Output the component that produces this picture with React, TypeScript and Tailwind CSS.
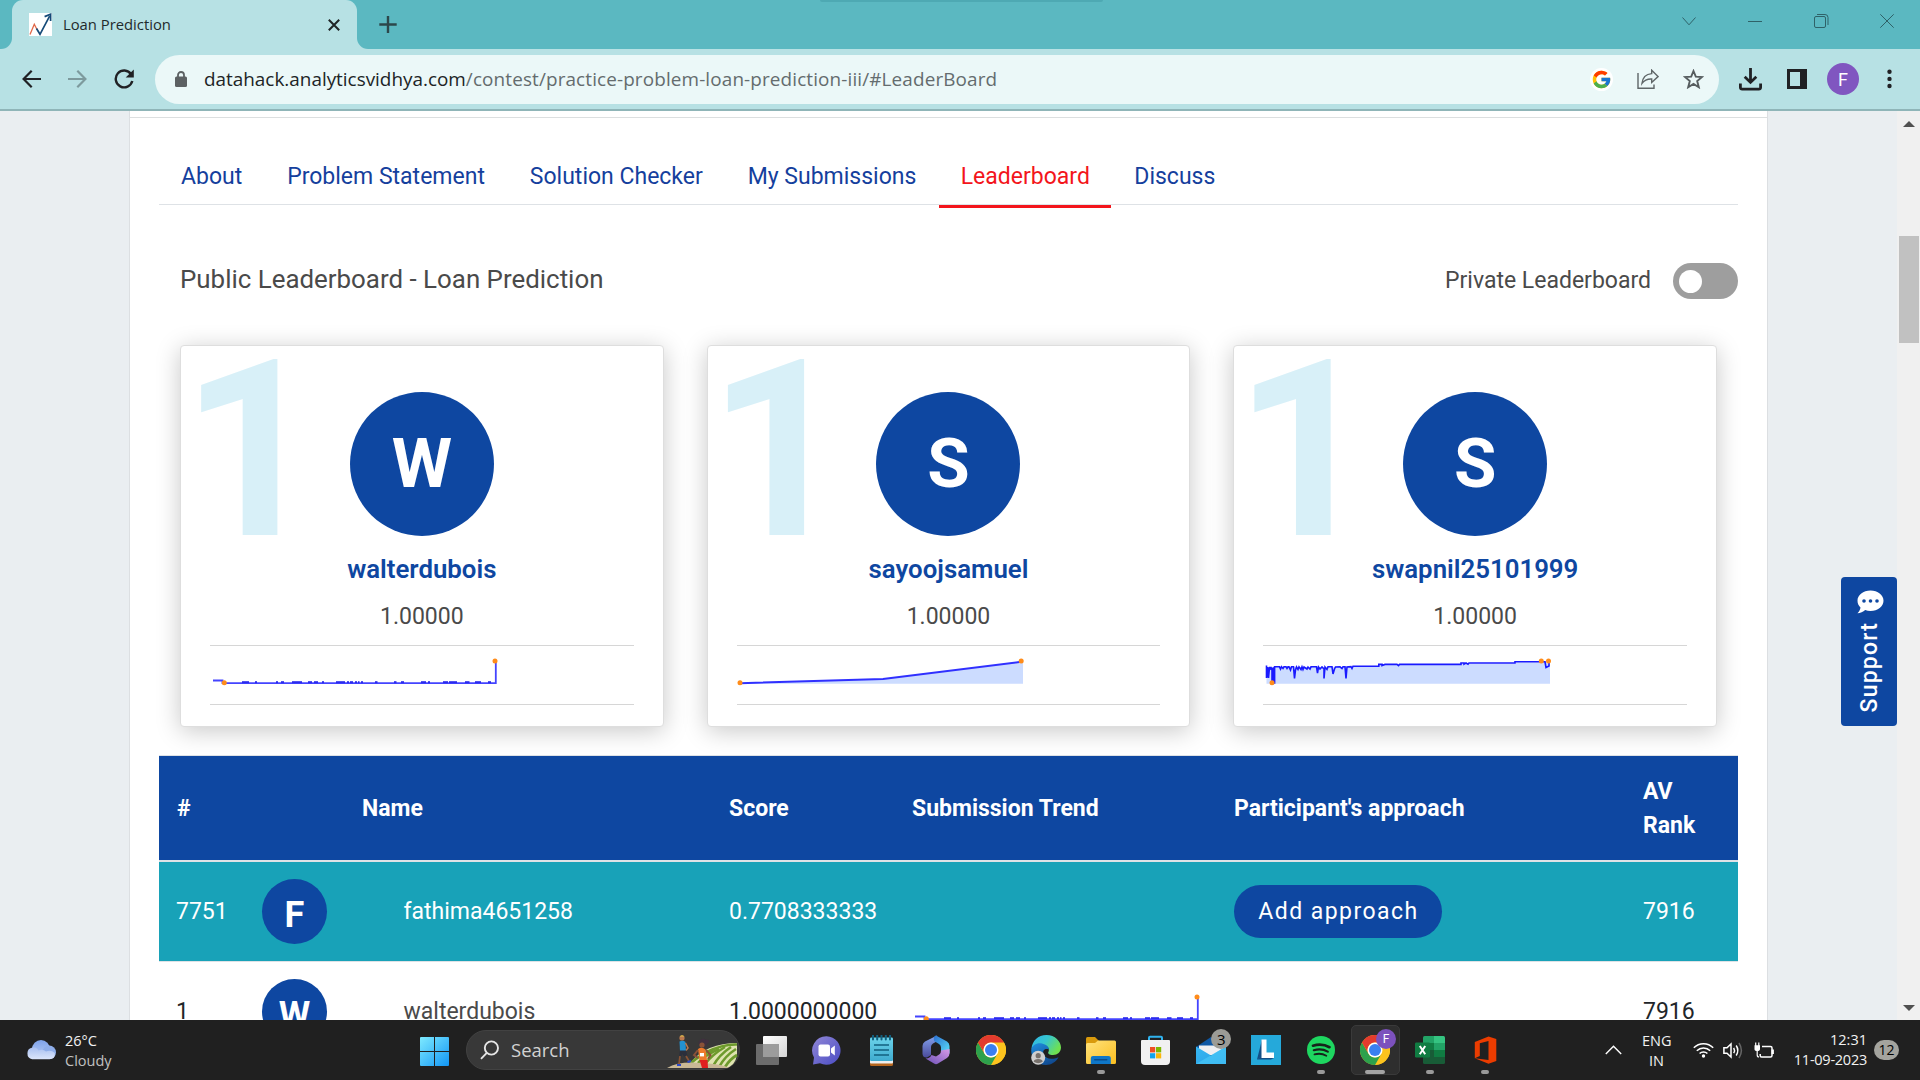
import React from "react";
import { FcGoogle } from "react-icons/fc";

/* ---------- Browser chrome ---------- */

function Favicon() {
  return (
    <svg width="23" height="23" viewBox="0 0 23 23">
      <rect width="23" height="23" fill="#fff" />
      <path d="M1 21.5L5.3 11.2L8 16.5" fill="none" stroke="#e2694a" strokeWidth="1.3" />
      <path d="M7.5 15.5L11 21.3L20.6 3.2" fill="none" stroke="#154a78" strokeWidth="1.7" />
      <path d="M15.6 3.6L21.6 1.2L21.6 8" fill="none" stroke="#154a78" strokeWidth="1.7" />
    </svg>
  );
}

function TabStrip() {
  return (
    <div className="relative flex h-[49px] shrink-0 bg-[#5bb8c1]">
      <div className="absolute top-0 left-[820px] h-[2px] w-[283px] rounded-b bg-[#4ea9b3]" />
      <div className="flex h-full w-3 items-end bg-[#b7e1e4]">
        <div className="h-full w-3 rounded-br-[11px] bg-[#5bb8c1]" />
      </div>
      <div className="flex h-full w-[345px] items-center rounded-t-[11px] bg-[#b7e1e4] pr-[17px] pl-[17px]">
        <Favicon />
        <span className="ml-[11px] grow font-['Open_Sans',sans-serif] text-[14.8px] text-[#1f2a2c]">Loan Prediction</span>
        <svg width="12" height="12" viewBox="0 0 12 12" stroke="#1f2426" strokeWidth="2">
          <path d="M0.8 0.8L11.2 11.2M11.2 0.8L0.8 11.2" />
        </svg>
      </div>
      <div className="h-full w-3 bg-[#b7e1e4]">
        <div className="h-full w-3 rounded-bl-[11px] bg-[#5bb8c1]" />
      </div>
      <svg className="mt-4 ml-[10px]" width="18" height="17" viewBox="0 0 18 17" stroke="#2c474b" strokeWidth="2.4">
        <path d="M9 0V17M0.3 8.5H17.7" />
      </svg>
      <div className="ml-auto flex items-start pt-[14px] pr-[26px] text-[#2f6268]">
        <svg className="mt-[3px] mr-[52px]" width="14" height="9" viewBox="0 0 14 9" fill="none" stroke="currentColor">
          <path d="M0.5 0.5L7 7.8L13.5 0.5" />
        </svg>
        <svg className="mt-[7px] mr-[52px]" width="14" height="1" viewBox="0 0 14 1">
          <rect width="14" height="1" fill="currentColor" />
        </svg>
        <svg className="mr-[51px]" width="15" height="14" viewBox="0 0 15 14" fill="none" stroke="currentColor">
          <rect x="0.5" y="2.5" width="11" height="11" rx="1.5" />
          <path d="M3 0.5H11A3 3 0 0 1 14 3.5V11" />
        </svg>
        <svg width="14" height="14" viewBox="0 0 14 14" fill="none" stroke="currentColor">
          <path d="M0.3 0.3L13.7 13.7M13.7 0.3L0.3 13.7" />
        </svg>
      </div>
    </div>
  );
}

function Toolbar() {
  return (
    <div className="flex h-[62px] shrink-0 items-center border-b-2 border-[#8fb5b8] bg-[#b7e1e4] text-[#202124]">
      <svg className="ml-[22px]" width="19" height="18" viewBox="0 0 19 18" fill="none" stroke="currentColor" strokeWidth="2.2">
        <path d="M19 9H2M9.7 0.8L1.6 9L9.7 17.2" />
      </svg>
      <svg className="ml-[27px]" width="19" height="18" viewBox="0 0 19 18" fill="none" stroke="#7d9a9d" strokeWidth="2.2">
        <path d="M0 9H17M9.3 0.8L17.4 9L9.3 17.2" />
      </svg>
      <svg className="ml-[27px]" width="20" height="20" viewBox="0 0 20 20" fill="none" stroke="currentColor" strokeWidth="2.4">
        <path d="M17.1 5.2A8.4 8.4 0 1 0 18.3 12" />
        <path d="M19.8 0.5V8.6H11.7Z" fill="currentColor" stroke="none" />
      </svg>
      <div className="ml-[21px] flex h-[49px] w-[1564px] items-center rounded-full bg-[#ebf8f8] pr-[15px] pl-[20px]">
        <svg width="12" height="16" viewBox="0 0 12 16">
          <path d="M3 6V4A3 3 0 0 1 9 4V6" fill="none" stroke="#5c6163" strokeWidth="1.8" />
          <rect y="5.5" width="12" height="10.5" rx="1.5" fill="#5c6163" />
        </svg>
        <div className="ml-[17px] grow pt-px font-['Open_Sans',sans-serif] text-[18.9px] whitespace-nowrap">
          <span className="text-[#202426]">datahack.analyticsvidhya.com</span>
          <span className="tracking-[0.13px] text-[#646c6e]">/contest/practice-problem-loan-prediction-iii/#LeaderBoard</span>
        </div>
        <div className="flex size-[23px] items-center justify-center rounded-full bg-white">
          <FcGoogle className="size-[21px]" />
        </div>
        <svg className="ml-[24px]" width="22" height="20" viewBox="0 0 22 20" fill="none" stroke="#5f6668" strokeWidth="1.4">
          <path d="M1 4V19.3H17V15.5" />
          <path d="M14.7 1.2L21 7.6L14.7 13.4V10C10.5 9.8 7.3 11.2 5 14.4C5.6 9 8.8 5 14.7 4.6Z" />
        </svg>
        <svg className="ml-[24px]" width="21" height="20" viewBox="0 0 21 20" fill="none" stroke="#565d5f" strokeWidth="1.9">
          <path d="M10.5 2L12.8 7.6L19 8L14.2 12L15.8 18.2L10.5 14.9L5.2 18.2L6.8 12L2 8L8.2 7.6Z" />
        </svg>
      </div>
      <svg className="ml-[20px]" width="23" height="23" viewBox="0 0 23 23" fill="none" stroke="currentColor" strokeWidth="2.8">
        <path d="M11.5 0V13M5.7 8.8L11.5 14.4L17.3 8.8" />
        <path d="M1.4 15.5V19.5A1.8 1.8 0 0 0 3.2 21.2H19.8A1.8 1.8 0 0 0 21.6 19.5V15.5" />
      </svg>
      <svg className="ml-[25px]" width="20" height="20" viewBox="0 0 20 20" fill="currentColor">
        <path fillRule="evenodd" d="M0 0H20V20H0ZM3 3V17H13V3Z" />
      </svg>
      <div className="ml-[20px] flex size-8 items-center justify-center rounded-full bg-[#8056c0] font-['Roboto',sans-serif] text-[18px] text-white">F</div>
      <svg className="ml-[27.5px]" width="5" height="20" viewBox="0 0 5 20" fill="currentColor">
        <circle cx="2.5" cy="2.8" r="2.2" />
        <circle cx="2.5" cy="9.9" r="2.2" />
        <circle cx="2.5" cy="17" r="2.2" />
      </svg>
    </div>
  );
}

/* ---------- Sparklines ---------- */

const FLAT_BUMPS: [number, number][] = [
  [29, 7], [42, 2], [63, 2], [68, 3], [79, 10], [95, 4], [101, 4], [109, 2], [123, 9], [134, 2], [137, 3],
  [142, 2], [145, 1.5], [148, 2], [162, 2.5], [181, 2.5], [188, 3], [208, 5], [215, 2], [230, 5], [236, 8],
  [252, 4.5], [262, 6], [275, 3],
];

function FlatSpark() {
  return (
    <svg className="overflow-visible" width="287" height="28" viewBox="0 0 287 28" fill="none">
      <path d="M0 20.5H9.5V23.2H282.8V1.5" stroke="#4444ff" strokeWidth="1.8" />
      {FLAT_BUMPS.map(([x, w]) => (
        <rect key={x} x={x} y="21.2" width={w} height="2" fill="#2a2aee" />
      ))}
      <circle cx="11.3" cy="22.8" r="2.5" fill="#ff8c1a" />
      <circle cx="282" cy="1" r="2.5" fill="#ff8c1a" />
    </svg>
  );
}

function RisingSpark() {
  return (
    <svg className="overflow-visible" width="287" height="28" viewBox="0 0 287 28" fill="none">
      <path d="M0 23.3L143 19.2L283 1.8V23.8H0Z" fill="#ccdcff" />
      <path d="M0 23.2L143 19L281 1.8" stroke="#3030ff" strokeWidth="1.9" />
      <circle cx="0" cy="22.8" r="2.5" fill="#ff8c1a" />
      <circle cx="281.2" cy="1" r="2.5" fill="#ff8c1a" />
    </svg>
  );
}

function NoisySpark() {
  return (
    <svg className="overflow-visible" width="287" height="28" viewBox="0 0 287 28" fill="none">
      <path d="M0.5 7H113V5H195V3.8H250V2.2H284V23.8H0.5Z" fill="#ccdcff" />
      <path
        d="M0.5 5.5V18L1.5 7V17.5L2.5 7.5V18L3.5 7.5H5V10L6 7.5V23L7 8V23L8 7V23L8.6 23V6.8H13.5L14.5 9L15.5 6.8L17 8.5L18 6.8H20L21 8.5L22 6.8H23L24.5 10L25.5 6.8H27.5L28.5 18.5L29.5 10L30.5 7L32 9.5L33 6.8L35 9.5L36 6.8L37 9.5L38 7L41 9L42 7L44 9L45 6.8H50.5L51.5 13L52.5 7L54 9L56 7L58 9V18.5L59 7L61 9.5L62 6.8H66L67 14L68.5 9L69.5 7L74 6.8L76 8.5L77 6.8H79L80 18.5L81 7L85 6.6L86 8.5L87 6.2H112.8V4.4H116V5.6L119 4.4H131L132.5 5.6L133.5 4.4H195V3H198V4.2L200 3L202 4.2L203 3H249V1.8H279L280 7.5L283 6V1.2"
        stroke="#1a1aff"
        strokeWidth="1.6"
      />
      <circle cx="6" cy="22.8" r="2.5" fill="#ff8c1a" />
      <circle cx="275.3" cy="1" r="2.5" fill="#ff8c1a" />
      <circle cx="282.5" cy="1" r="2.5" fill="#ff8c1a" />
    </svg>
  );
}

/* ---------- Page ---------- */

const NAV = ["About", "Problem Statement", "Solution Checker", "My Submissions"];

function NavTabs() {
  return (
    <nav className="flex h-[87px] shrink-0 border-b border-[#dee2e6] pl-[22px] text-[23px] text-[#153f9d]">
      {NAV.map((label) => (
        <div key={label} className="mr-[44.9px] flex h-[118px] items-center whitespace-nowrap">{label}</div>
      ))}
      <div className="-ml-[22px] flex h-[118px] w-[172px] items-center justify-center text-[#f3151b]">Leaderboard</div>
      <div className="ml-[23px] flex h-[118px] items-center">Discuss</div>
    </nav>
  );
}

const LEADERS = [
  { initial: "W", name: "walterdubois", chart: <FlatSpark /> },
  { initial: "S", name: "sayoojsamuel", chart: <RisingSpark /> },
  { initial: "S", name: "swapnil25101999", chart: <NoisySpark /> },
];

function LeaderCard({ initial, name, chart }: { initial: string; name: string; chart: React.ReactNode }) {
  return (
    <div className="relative flex h-[382px] flex-col items-center rounded border border-[#dedede] bg-white px-[29px] pt-[46px] shadow-[0_4px_24px_rgba(0,0,0,0.22)]">
      <span className="absolute -top-[18px] left-0 text-[246px] leading-[246px] font-bold text-[#d8f0f8]">1</span>
      <div className="relative flex size-[144px] shrink-0 items-center justify-center rounded-full bg-[#0e47a1] pb-[2px] text-[69px] leading-none font-bold text-white">
        {initial}
      </div>
      <div className="mt-[17px] h-[32px] text-[25.8px] leading-8 font-semibold text-[#0e47a1]">{name}</div>
      <div className="mt-[16px] h-[32px] text-[23px] leading-8 text-[#4a4a4a]">1.00000</div>
      <div className="mt-[12px] h-[60px] w-full border-y border-[#d6d6d6] pt-[14px] pl-[3px]">{chart}</div>
    </div>
  );
}

const GRID = "grid grid-cols-[84px_119px_367px_183px_322px_409px_95px] items-center";

function Leaderboard() {
  return (
    <div className="mt-[28px] border-t border-[#dee2e6] text-[23px]">
      <div className={GRID + " h-[104px] bg-[#0e47a1] pt-[2px] font-bold text-white"}>
        <div className="pl-[18px]">#</div>
        <div />
        <div>Name</div>
        <div>Score</div>
        <div>Submission Trend</div>
        <div>Participant's approach</div>
        <div className="leading-[34px]">AV<br />Rank</div>
      </div>
      <div className={GRID + " h-[102px] border-t-2 border-b border-[#dee2e6] bg-[#18a2b8] text-white"}>
        <div className="pt-px pl-[17px]">7751</div>
        <div className="pl-[19px]">
          <div className="flex size-[65px] items-center justify-center rounded-full bg-[#0e47a1] pt-[7px] text-[36px] leading-none font-bold">F</div>
        </div>
        <div className="pt-px pl-[41.5px]">fathima4651258</div>
        <div className="pt-px">0.7708333333</div>
        <div />
        <div className="flex">
          <button className="h-[53px] w-[208px] rounded-full bg-[#0e47a1] pt-px pl-[1px] tracking-[1.45px]">Add approach</button>
        </div>
        <div className="pt-px">7916</div>
      </div>
      <div className={GRID + " h-[99px] text-[#212529]"}>
        <div className="pt-[2px] pl-[17px]">1</div>
        <div className="pl-[19px]">
          <div className="flex size-[65px] items-center justify-center rounded-full bg-[#0e47a1] pt-[7px] text-[36px] leading-none font-bold text-white">W</div>
        </div>
        <div className="pt-[2px] pl-[41.5px] text-[#4a4a4a]">walterdubois</div>
        <div className="pt-[2px]">1.0000000000</div>
        <div className="flex pb-[4px] pl-[3px]"><FlatSpark /></div>
        <div />
        <div className="pt-[2px]">7916</div>
      </div>
    </div>
  );
}

function SupportButton() {
  return (
    <div className="absolute top-[466px] right-[23px] flex h-[149px] w-[56px] flex-col items-center rounded bg-[#0e47a1] pt-[13px]">
      <svg className="ml-[2px]" width="27" height="24" viewBox="0 0 27 24">
        <path d="M13.5 0.5C20.7 0.5 26.5 5 26.5 10.7S20.7 21 13.5 21C11.6 21 9.8 20.7 8.2 20.1C6.2 21.7 3.4 23.3 0.4 23.3C2.2 21.6 3.3 19.5 3.5 17.5C1.6 15.6 0.5 13.3 0.5 10.7C0.5 5 6.3 0.5 13.5 0.5Z" fill="#fff" />
        <g fill="#0e47a1">
          <circle cx="7" cy="11" r="1.8" />
          <circle cx="13.5" cy="11" r="1.8" />
          <circle cx="20" cy="11" r="1.8" />
        </g>
      </svg>
      <span className="mt-[8px] ml-[2px] rotate-180 text-[23px] leading-[30px] font-medium tracking-[1.2px] text-white [writing-mode:vertical-rl]">Support</span>
    </div>
  );
}

function Page() {
  return (
    <div className="relative flex h-[909px] shrink-0 overflow-hidden bg-[#eaeef1] font-['Roboto',sans-serif]">
      <div className="ml-[129px] w-[1639px] border-x border-[#dcdfe2] bg-white">
        <div className="h-[7px] border-b border-[#dcdfe0]" />
        <div className="ml-[29px] w-[1579px]">
          <NavTabs />
          <div className="ml-[780px] h-[4px] w-[172px]">
            <div className="h-[3px] w-full bg-[#f3151b]" />
          </div>
          <div className="mt-[52px] flex h-[40px] items-center text-[#4a4a4a]">
            <h1 className="ml-[21px] grow pb-[4px] text-[25.9px]">Public Leaderboard - Loan Prediction</h1>
            <span className="mr-[22px] pt-px text-[23px]">Private Leaderboard</span>
            <div className="flex h-[36px] w-[65px] items-center rounded-full bg-[#9e9e9e] pl-[6px]">
              <div className="size-[23px] rounded-full bg-white" />
            </div>
          </div>
          <div className="mt-[44px] mr-[21px] ml-[21px] grid grid-cols-3 gap-[43px]">
            {LEADERS.map((l) => (
              <LeaderCard key={l.name} {...l} />
            ))}
          </div>
          <Leaderboard />
        </div>
      </div>
      <div className="ml-auto flex w-[23px] flex-col items-center bg-[#f0f0f0]">
        <svg className="mt-[10px] ml-px shrink-0" width="12" height="6" viewBox="0 0 12 6"><path d="M0 6L6 0L12 6Z" fill="#505050" /></svg>
        <div className="mt-[109px] ml-px h-[107px] w-[20px] shrink-0 bg-[#c1c1c1]" />
        <svg className="mt-auto mb-[9px] ml-px shrink-0" width="12" height="6" viewBox="0 0 12 6"><path d="M0 0L6 6L12 0Z" fill="#505050" /></svg>
      </div>
      <SupportButton />
    </div>
  );
}

/* ---------- Taskbar icons ---------- */

function ChromeIcon() {
  return (
    <svg width="30" height="30" viewBox="0 0 48 48">
      <circle cx="24" cy="24" r="24" fill="#fbc116" />
      <path d="M24 12H44.8A24 24 0 0 1 24 48L34.4 30Z" fill="#fcc31e" />
      <path d="M3.2 12A24 24 0 0 0 24 48L34.4 30A12 12 0 0 1 13.6 30Z" fill="#2da14c" />
      <path d="M3.2 12L13.6 30A12 12 0 0 1 24 12H44.8A24 24 0 0 0 3.2 12Z" fill="#e33b2e" />
      <circle cx="24" cy="24" r="12" fill="#fff" />
      <circle cx="24" cy="24" r="9.6" fill="#3a7ff0" />
    </svg>
  );
}

function TaskViewIcon() {
  return (
    <svg width="31" height="29" viewBox="0 0 31 29">
      <defs>
        <linearGradient id="tv" x1="0" y1="0" x2="1" y2="1"><stop offset="0" stopColor="#fff" /><stop offset="1" stopColor="#d5d5d5" /></linearGradient>
      </defs>
      <rect x="7" width="24" height="21" rx="1" fill="url(#tv)" />
      <rect y="8" width="23" height="21" rx="1" fill="#6c6c6c" />
      <rect x="7" y="8" width="16" height="13" fill="#9c9c9c" />
    </svg>
  );
}

function ChatIcon() {
  return (
    <svg width="29" height="29" viewBox="0 0 29 29">
      <defs>
        <linearGradient id="chat" x1="0" y1="0" x2="1" y2="1"><stop offset="0" stopColor="#9187d6" /><stop offset="1" stopColor="#4a4cc4" /></linearGradient>
      </defs>
      <path d="M14.5 0.3A14.2 14.2 0 1 1 8 27.2L1 28.6L2 21.5A14.2 14.2 0 0 1 14.5 0.3Z" fill="url(#chat)" />
      <rect x="6.5" y="8.5" width="11.5" height="12" rx="2" fill="#fff" />
      <path d="M19 12.5L22.8 9.5V19.5L19 16.5Z" fill="#fff" />
    </svg>
  );
}

function NotepadIcon() {
  return (
    <svg width="23" height="31" viewBox="0 0 23 31">
      <defs>
        <linearGradient id="np" x1="0" y1="0" x2="0" y2="1"><stop offset="0" stopColor="#6bd3ea" /><stop offset="1" stopColor="#3fabcf" /></linearGradient>
      </defs>
      <rect y="24" width="23" height="7" rx="1.5" fill="#b5651d" />
      <rect y="22" width="23" height="6.5" rx="1" fill="#eee" />
      <rect y="2.5" width="23" height="23.5" rx="1.2" fill="url(#np)" />
      <path d="M4 10H19M4 15H19M4 20H19" stroke="#12607f" strokeWidth="1.7" />
      <path d="M3 0.5V4.5M7.2 0.5V4.5M11.5 0.5V4.5M15.8 0.5V4.5M20 0.5V4.5" stroke="#12607f" strokeWidth="2" strokeLinecap="round" />
    </svg>
  );
}

function M365Icon() {
  return (
    <svg width="28" height="30" viewBox="0 0 28 30">
      <defs>
        <linearGradient id="ma" x1="0" y1="0" x2="0" y2="1"><stop offset="0" stopColor="#85a4ee" /><stop offset="1" stopColor="#4a4a9c" /></linearGradient>
        <linearGradient id="mb" x1="0" y1="0" x2="1" y2="1"><stop offset="0" stopColor="#2b6fd1" /><stop offset="1" stopColor="#5ce0fa" /></linearGradient>
        <linearGradient id="mc" x1="0" y1="1" x2="1" y2="0"><stop offset="0" stopColor="#6a4fb5" /><stop offset="1" stopColor="#d79be8" /></linearGradient>
      </defs>
      <path d="M15 0.5L3 6.5Q0.5 8 0.5 11V19Q1 23 5 22.5L9 20V12Q9 9.5 11 8.5L15.5 6Z" fill="url(#ma)" />
      <path d="M14 0.5L25 6.5Q27.5 8 27.5 11V18.5L19 17V12.5Q19 10 17 9L12 6Q11 1 14 0.5Z" fill="url(#mb)" />
      <path d="M27.5 14V18.5Q27.5 21.5 25 23L16 28.6Q14 29.7 12 28.6L3.5 23.4Q8 23.6 9.5 20L14 21.5L17.5 19.3Q19 18 19 15.5Z" fill="url(#mc)" />
    </svg>
  );
}

function EdgeIcon() {
  return (
    <svg width="30" height="30" viewBox="0 0 30 30">
      <defs>
        <linearGradient id="ea" x1="0" y1="0" x2="1" y2="0.5"><stop offset="0" stopColor="#2fb6ea" /><stop offset="0.5" stopColor="#36c6d0" /><stop offset="1" stopColor="#6fe050" /></linearGradient>
        <linearGradient id="eb" x1="0" y1="0" x2="0.6" y2="1"><stop offset="0" stopColor="#1f8fe0" /><stop offset="1" stopColor="#104a90" /></linearGradient>
      </defs>
      <path d="M0.5 14C1 6 7 0 15.5 0S30 6.5 30 12.5C30 17 26.5 20 22 20C18 20 16.5 18.4 17.4 17C18.5 15 18 12 14 10.8C9 9.5 3 10 0.5 14Z" fill="url(#ea)" />
      <path d="M0.2 15C1 10 6 7.5 11 8.5C15 9.5 18 11.5 18 14.5C13 13 11.5 16 12.5 19C14 23.5 20 25.5 27.5 22.3C25 27 20.5 30 15 30C6.5 30 0 23.5 0.2 15Z" fill="url(#eb)" />
      <circle cx="7.2" cy="22.8" r="7" fill="#cfcfcf" />
      <circle cx="7.2" cy="20.7" r="2.6" fill="#77716c" />
      <path d="M2.7 26.8Q3 24 7.2 24T11.7 26.8Q7.2 29.5 2.7 26.8Z" fill="#77716c" />
    </svg>
  );
}

function ExplorerIcon() {
  return (
    <svg width="30" height="27" viewBox="0 0 30 27">
      <defs>
        <linearGradient id="fe" x1="0" y1="0" x2="1" y2="1"><stop offset="0" stopColor="#ffe27c" /><stop offset="1" stopColor="#fbbf20" /></linearGradient>
      </defs>
      <path d="M0 1.5Q0 0 1.5 0H9L12.5 3.5V8H0Z" fill="#d99a0c" />
      <path d="M0 7.5Q0 6 1.5 6H9L12 3.5H28.5Q30 3.5 30 5V25.5Q30 27 28.5 27H1.5Q0 27 0 25.5Z" fill="url(#fe)" />
      <path d="M4.8 27V21Q4.8 19 7 19H22.5Q24.8 19 24.8 21V27Z" fill="#0f77c8" />
      <rect x="8" y="22" width="13.5" height="1.6" rx="0.8" fill="#0a4d8c" />
    </svg>
  );
}

function StoreIcon() {
  return (
    <svg width="29" height="30" viewBox="0 0 29 30">
      <path d="M8 6V2.8Q8 1.8 9 1.8H20Q21 1.8 21 2.8V6" fill="none" stroke="#2fb2ee" strokeWidth="2" />
      <path d="M0 6Q0 5 1 5H28Q29 5 29 6V26Q29 30 25 30H4Q0 30 0 26Z" fill="#f1f1f1" />
      <rect x="9" y="12" width="5.2" height="5.4" fill="#ef4f24" />
      <rect x="15" y="12" width="5.2" height="5.4" fill="#7db700" />
      <rect x="9" y="18.2" width="5.2" height="5.2" fill="#12a3ec" />
      <rect x="15" y="18.2" width="5.2" height="5.2" fill="#fbb70a" />
    </svg>
  );
}

function MailIcon() {
  return (
    <svg width="30" height="27" viewBox="0 0 30 27">
      <defs>
        <linearGradient id="ml" x1="0" y1="0" x2="1" y2="1"><stop offset="0" stopColor="#36b7f2" /><stop offset="1" stopColor="#2ba0e6" /></linearGradient>
      </defs>
      <path d="M0 10L15 0L30 10V18H0Z" fill="#0f58a5" />
      <path d="M3 8.5H27V18H3Z" fill="#efeff2" />
      <path d="M0 9.5L15 18.5L30 9.5V27H0Z" fill="url(#ml)" />
      <path d="M0 27L30 9.5V27Z" fill="#4fd0fb" opacity="0.55" />
    </svg>
  );
}

function LIcon() {
  return (
    <svg width="30" height="30" viewBox="0 0 30 30">
      <rect width="30" height="30" fill="#25a9da" />
      <path d="M11 4.5V21L6 24.5Z" fill="#134f86" />
      <path d="M6 24.5L11 20H23V23L20 24.5Z" fill="#134f86" />
      <path d="M10.5 4.5H15.5V17.5H23V23H10.5Z" fill="#fff" />
    </svg>
  );
}

function SpotifyIcon() {
  return (
    <svg width="28" height="28" viewBox="0 0 28 28" fill="none" stroke="#16241b" strokeLinecap="round">
      <circle cx="14" cy="14" r="14" fill="#1ed760" stroke="none" />
      <path d="M6 9.7Q15 7 22.5 11.2" strokeWidth="2.7" />
      <path d="M6.8 14.2Q14.5 12 20.8 15.6" strokeWidth="2.2" />
      <path d="M7.5 18.4Q14 16.6 19.3 19.7" strokeWidth="1.8" />
    </svg>
  );
}

function ExcelIcon() {
  return (
    <svg width="30" height="28" viewBox="0 0 30 28">
      <path d="M8 1.5Q8 0 9.5 0H19V14H8Z" fill="#22a366" />
      <path d="M19 0H28.5Q30 0 30 1.5V7H19Z" fill="#35c481" />
      <rect x="8" y="7" width="11" height="7" fill="#107c42" />
      <rect x="19" y="7" width="11" height="7" fill="#22a366" />
      <rect x="8" y="14" width="11" height="7" fill="#185c37" />
      <rect x="19" y="14" width="11" height="7" fill="#107c42" />
      <path d="M8 21H30V26.5Q30 28 28.5 28H9.5Q8 28 8 26.5Z" fill="#185c37" />
      <rect y="6.5" width="15" height="15" rx="1.2" fill="#107c42" />
      <path d="M4.8 10L10.2 18.3M10.2 10L4.8 18.3" stroke="#fff" strokeWidth="2" />
    </svg>
  );
}

function OfficeIcon() {
  return (
    <svg width="23" height="28" viewBox="0 0 23 28">
      <path d="M0.8 6L14.5 0.5L22.3 3V25L14.5 27.7L0.8 22.3L14.5 24V5L5.8 7.3V20L0.8 22.3Z" fill="#eb3c00" />
    </svg>
  );
}

const APPS: { key: string; icon: React.ReactNode; running?: boolean; badge?: string; active?: boolean }[] = [
  { key: "tasks", icon: <TaskViewIcon /> },
  { key: "chat", icon: <ChatIcon /> },
  { key: "notepad", icon: <NotepadIcon /> },
  { key: "m365", icon: <M365Icon /> },
  { key: "chrome", icon: <ChromeIcon /> },
  { key: "edge", icon: <EdgeIcon /> },
  { key: "explorer", icon: <ExplorerIcon />, running: true },
  { key: "store", icon: <StoreIcon /> },
  { key: "mail", icon: <MailIcon />, badge: "3" },
  { key: "l", icon: <LIcon /> },
  { key: "spotify", icon: <SpotifyIcon />, running: true },
  { key: "chrome-f", icon: <ChromeIcon />, badge: "F", active: true },
  { key: "excel", icon: <ExcelIcon />, running: true },
  { key: "office", icon: <OfficeIcon />, running: true },
];

function SearchArt() {
  return (
    <svg width="72" height="33" viewBox="0 0 72 33">
      <path d="M24 27Q40 8 70 8V20Q68 32 58 33H20Z" fill="#dfe3b0" />
      <g fill="none" stroke="#6d9a2c" strokeWidth="2.6">
        <path d="M40 17Q56 9 70 9.5" />
        <path d="M24 28Q34 19 46 15" />
        <path d="M31 28Q38 20 52 14" />
        <path d="M38 29Q46 19 58 12" />
        <path d="M46 31Q52 20 64 12" />
        <path d="M52 32Q58 21 69 14" />
        <path d="M58 32Q63 24 70 20" />
      </g>
      <path d="M0 33Q12 26 34 28Q56 29 62 33Z" fill="#c9b895" />
      <circle cx="15" cy="3" r="2.6" fill="#b9794f" />
      <path d="M12.5 1.5Q15 -0.8 17.6 1.4Z" fill="#e5c14a" />
      <path d="M12.5 6.5Q16 5 18.5 7L19 16H13Z" fill="#2391d0" />
      <path d="M18.5 8L21 13L19 15.5" fill="none" stroke="#b9794f" strokeWidth="1.5" />
      <path d="M13 15.5H19L20.5 21L17 21.5L15.5 19L14 22H12Z" fill="#2b2f3b" />
      <path d="M13 21L12 29M19 21L22 26" stroke="#8a5435" strokeWidth="1.7" />
      <path d="M10 30H14M20.5 27L24 26" stroke="#2a48c8" strokeWidth="2" />
      <circle cx="36" cy="8" r="4.3" fill="#40303f" />
      <circle cx="40" cy="6.5" r="2" fill="#40303f" />
      <circle cx="35" cy="10" r="2.6" fill="#8a5238" />
      <path d="M31 14Q35 11.5 38.5 14.5L40 25H32.5Z" fill="#ee7a2b" />
      <path d="M31 15L27 20L31 23M39 15L43.5 20L41 24" fill="none" stroke="#8a5238" strokeWidth="2" />
      <rect x="33" y="18" width="4" height="3.4" fill="#fff" />
      <path d="M32.5 25H40.5L41 33H35Z" fill="#e01f1f" />
    </svg>
  );
}

function Taskbar() {
  return (
    <div className="flex h-[60px] shrink-0 items-center bg-[#202020] font-['Open_Sans',sans-serif] text-white">
      <div className="flex w-[420px] items-center pl-[26px]">
        <svg width="30" height="20" viewBox="0 0 30 20">
          <defs>
            <linearGradient id="ca" x1="0" y1="0" x2="0" y2="1"><stop offset="0" stopColor="#7fa3ea" /><stop offset="1" stopColor="#b9cdf5" /></linearGradient>
            <linearGradient id="cb" x1="0" y1="0" x2="0" y2="1"><stop offset="0" stopColor="#a9c0f0" /><stop offset="1" stopColor="#dbe5fb" /></linearGradient>
          </defs>
          <circle cx="15" cy="9" r="9" fill="url(#ca)" />
          <circle cx="23.2" cy="12.3" r="6.8" fill="#8faeea" />
          <path d="M6.2 19.2A6 6 0 0 1 6.5 7.4Q10.5 7 12.5 10.5Q17 8.5 20 11.5Q25 9.5 28.8 13Q29.5 19.2 23.5 19.2Z" fill="url(#cb)" />
        </svg>
        <div className="ml-[9px] pt-[2px] text-[14.5px] leading-5 text-[#f2f2f2]">
          <div>26°C</div>
          <div className="text-[#c0c0c0]">Cloudy</div>
        </div>
      </div>
      <svg className="mt-[2px]" width="29" height="29" viewBox="0 0 29 29">
        <defs>
          <linearGradient id="win" gradientUnits="userSpaceOnUse" x1="0" y1="0" x2="29" y2="29"><stop offset="0" stopColor="#7eeaff" /><stop offset="1" stopColor="#1296f5" /></linearGradient>
        </defs>
        <path d="M0 1Q0 0 1 0H14V14H0ZM15 0H28Q29 0 29 1V14H15ZM0 15H14V29H1Q0 29 0 28ZM15 15H29V28Q29 29 28 29H15Z" fill="url(#win)" />
      </svg>
      <div className="ml-[17px] flex h-[40px] w-[274px] items-center rounded-full border border-[#424242] bg-[#383838] pl-[13px]">
        <svg width="20" height="20" viewBox="0 0 20 20" fill="none" stroke="#e6e6e6" strokeWidth="1.9">
          <circle cx="11.4" cy="8" r="6.6" />
          <path d="M6.8 12.8L1 18.8" />
        </svg>
        <span className="ml-[11px] text-[18.5px] text-[#d2d2d2]">Search</span>
        <div className="mt-[2px] ml-auto"><SearchArt /></div>
      </div>
      <div className="ml-[4px] flex">
        {APPS.map((app) => (
          <div key={app.key} className="relative flex h-[60px] w-[54.92px] items-center justify-center">
            {app.active && <div className="absolute top-[5px] left-[3px] h-[50px] w-[49px] rounded-[5px] border border-[#3a3a3a] bg-[#2e2e2e]" />}
            <div className="relative">{app.icon}</div>
            {app.badge === "3" && (
              <div className="absolute top-[9px] left-[28px] flex size-[20px] items-center justify-center rounded-full bg-[#9b9b96] text-[15px] leading-none text-black">3</div>
            )}
            {app.badge === "F" && (
              <div className="absolute top-[9px] left-[28px] flex size-[20px] items-center justify-center rounded-full bg-[#7c51bd] font-['Roboto',sans-serif] text-[12px] leading-none text-white">F</div>
            )}
            {app.running && <div className="absolute top-[50px] left-[23.5px] h-[4px] w-[8px] rounded-full bg-[#999]" />}
            {app.active && <div className="absolute top-[50px] left-[17.5px] h-[4px] w-[20px] rounded-full bg-[#a3a3a3]" />}
          </div>
        ))}
      </div>
      <div className="ml-auto flex items-center pr-[21px] text-[14.5px] leading-5 text-[#f2f2f2]">
        <svg width="17" height="10" viewBox="0 0 17 10" fill="none" stroke="#fff" strokeWidth="1.4">
          <path d="M0.8 9L8.5 1.2L16.2 9" />
        </svg>
        <div className="ml-[20px] w-[29px] pt-[2px] text-center">ENG<br />IN</div>
        <svg className="ml-[22px]" width="21" height="16" viewBox="0 0 21 16" fill="none" stroke="#fff" strokeWidth="1.5">
          <path d="M0.8 5.8A13.5 13.5 0 0 1 20.2 5.8" />
          <path d="M3.8 8.8A9.3 9.3 0 0 1 17.2 8.8" />
          <path d="M6.6 11.6A5.3 5.3 0 0 1 14.4 11.6" />
          <circle cx="10.5" cy="14" r="1.7" fill="#fff" stroke="none" />
        </svg>
        <svg className="ml-[9px]" width="20" height="17" viewBox="0 0 20 17" fill="none" stroke="#fff" strokeWidth="1.5">
          <path d="M0.9 5.8V11.2H4L8 15V2L4 5.8Z" />
          <path d="M10.7 5.8Q12.3 8.5 10.7 11.2" />
          <path d="M13.2 3.5Q16.4 8.5 13.2 13.5" />
          <path d="M16 1Q20.8 8.5 16 16" stroke="#666" />
        </svg>
        <svg className="ml-[11px]" width="21" height="17" viewBox="0 0 21 17" fill="none" stroke="#fff" strokeWidth="1.5">
          <path d="M8 4.5H16.5Q18 4.5 18 6V13.5Q18 15 16.5 15H7.5Q6.2 15 6.2 13.5V12" />
          <path d="M18.7 7.5V12" strokeWidth="2.4" />
          <path d="M0.5 3.3H6V7Q6 9 3.2 9T0.5 7Z" fill="#fff" stroke="none" />
          <path d="M1.7 0.5V4M4.8 0.5V4M3.2 8.5V13Q3.2 15 5 15" strokeWidth="1.2" />
        </svg>
        <div className="ml-[16px] w-[76px] text-right"><div>12:31</div><div className="tracking-[-0.25px] whitespace-nowrap">11-09-2023</div></div>
        <div className="ml-[7px] flex h-[20px] w-[25px] items-center justify-center rounded-full bg-[#a4a49e] text-[14px] text-black">12</div>
      </div>
    </div>
  );
}

export default function App() {
  return (
    <div className="flex h-[1080px] w-[1920px] flex-col overflow-hidden">
      <TabStrip />
      <Toolbar />
      <Page />
      <Taskbar />
    </div>
  );
}
